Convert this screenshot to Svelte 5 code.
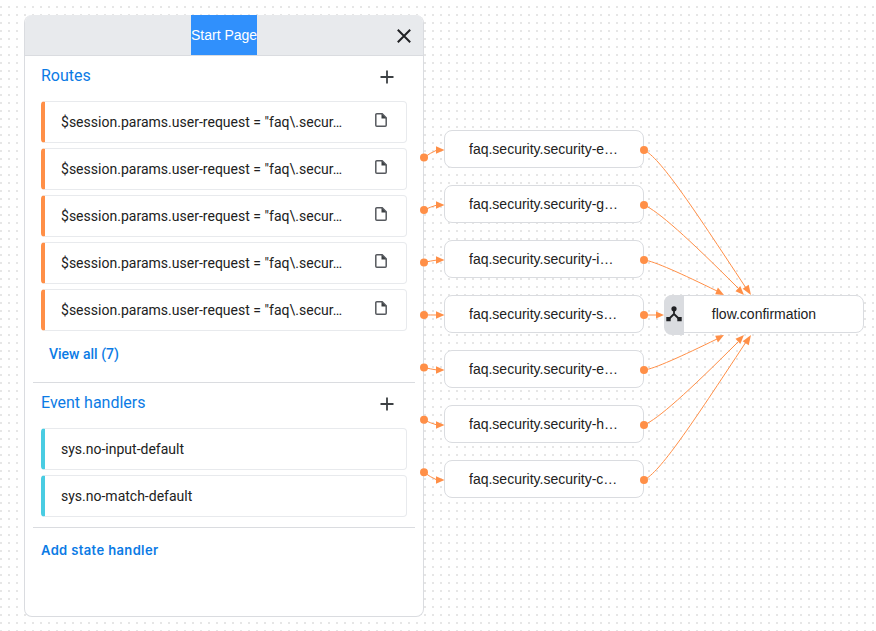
<script>
  const routes = Array.from({ length: 5 }, () => '$session.params.user-request = "faq\\.secur…');
  const handlers = ['sys.no-input-default', 'sys.no-match-default'];
  const nodes = ['e', 'g', 'i', 's', 'e', 'h', 'c'].map((s, i) => ({
    label: `faq.security.security-${s}…`,
    y: 130 + i * 55
  }));
  const inEdges = nodes.map((n, i) => {
    const y = 157.6 + i * 52.45;
    const end = n.y + 20;
    return { y, end, d: `M424 ${y} Q430 ${end + (y - end) * 0.4} 437 ${end}` };
  });
  const outEdges = [
    { d: 'M644 150 C660 158 690 203 746 288', tip: '751,295 748.7,284.8 742.7,288.8' },
    { d: 'M644 205 C658 211 688 238 738 288', tip: '744,295 740.3,286 735.5,291.3' },
    { d: 'M644 260 C654 261 682 274 717 291', tip: '724,295 717.9,287.4 715.2,294.3' },
    { d: 'M644 315 L657 315', tip: '664,315 656,311.5 656,318.5' },
    { d: 'M644 370 C654 369 682 356 717 339', tip: '724,335 717.9,342.6 715.2,335.7' },
    { d: 'M644 425 C658 419 688 392 738 342', tip: '744,335 740.3,344 735.5,338.7' },
    { d: 'M644 480 C660 472 690 427 746 342', tip: '751,335 748.7,345.2 742.7,341.2' }
  ];
</script>

{#snippet plus()}
  <svg class="plus" width="14" height="14" viewBox="0 0 14 14"><path d="M7 .5v13M.5 7h13" /></svg>
{/snippet}

<main class="canvas">
  <section class="panel">
    <header>
      <span class="title">Start Page</span>
      <svg class="close" width="14" height="14" viewBox="0 0 14 14"><path d="M.8.8l12.4 12.4M13.2.8L.8 13.2" /></svg>
    </header>
    <div class="group routes">
      <div class="heading"><h2>Routes</h2>{@render plus()}</div>
      <div class="cards">
        {#each routes as route}
          <div class="card">
            <span>{route}</span>
            <svg width="12" height="14" viewBox="0 0 12 14">
              <path class="file" d="M1.8.8h5.4l4 4v7.4a1 1 0 0 1-1 1H1.8a1 1 0 0 1-1-1V1.8a1 1 0 0 1 1-1z" />
              <path class="fold" d="M6.5.8v4.7h4.8z" />
            </svg>
          </div>
        {/each}
      </div>
      <div class="view">View all (7)</div>
    </div>
    <div class="group events">
      <div class="heading"><h2>Event handlers</h2>{@render plus()}</div>
      <div class="cards">
        {#each handlers as handler}
          <div class="card event"><span>{handler}</span></div>
        {/each}
      </div>
    </div>
    <div class="add">Add state handler</div>
  </section>

  {#each nodes as node}
    <div class="node" style="top: {node.y}px">{node.label}</div>
  {/each}
  <div class="node flow">flow.confirmation</div>
  <div class="badge">
    <svg width="16" height="16" viewBox="0 0 16 16">
      <path class="branch" d="M8 3v5.5M8 8L2.8 13M8 8l5.2 5" />
      <circle cx="8" cy="2.8" r="2.6" /><path d="M.3 10.9h4.4v4.3H.3zM11.3 10.9h4.4v4.3h-4.4z" />
    </svg>
  </div>

  <svg class="edges" width="876" height="631" viewBox="0 0 876 631">
    {#each inEdges as edge}
      <path d={edge.d} />
      <circle cx="424" cy={edge.y} r="4" />
      <polygon points="444.5,{edge.end} 436,{edge.end - 3.7} 436,{edge.end + 3.7}" />
    {/each}
    {#each outEdges as edge, i}
      <path d={edge.d} />
      <circle cx="644" cy={150 + i * 55} r="4" />
      <polygon points={edge.tip} />
    {/each}
  </svg>
</main>

<style>
  :global(body) { margin: 0; }
  .canvas {
    position: relative;
    box-sizing: border-box;
    width: 876px;
    height: 631px;
    padding: 15px 0 0 24px;
    overflow: hidden;
    background: conic-gradient(from 270deg at 2px 2px, #e6e6e6 90deg, #fff 0) 0 6px / 8px 8px;
    font: 14px/20px Roboto, sans-serif;
    color: #212121;
  }
  .panel {
    box-sizing: border-box;
    width: 400px;
    height: 602px;
    border: 1px solid #dadce0;
    border-top: 0;
    border-radius: 8px;
    background: #fff;
    overflow: hidden;
  }
  header {
    display: grid;
    grid-template-columns: 1fr auto 1fr;
    align-items: center;
    height: 40px;
    border-bottom: 1px solid #dadce0;
    background: #e8eaed;
    font-family: "Liberation Sans", Arial, sans-serif;
  }
  .title { grid-column: 2; width: 66px; white-space: nowrap; line-height: 40px; background: #3090fc; color: #fff; }
  .close { justify-self: end; margin: 2px 12px 0 0; fill: none; stroke: #202124; stroke-width: 2; }
  .group { margin: 0 8px; padding: 0 8px; border-bottom: 1px solid #dadce0; }
  .routes { height: 326px; }
  .events { height: 144px; }
  .heading { display: flex; justify-content: space-between; height: 45px; }
  h2 { margin: 0; padding-top: 8px; font-size: 16px; font-weight: 400; line-height: 24px; color: #0b7be5; }
  .plus { margin: 14px 13px 0 0; fill: none; stroke: #3c4043; stroke-width: 1.8; }
  .cards { display: flex; flex-direction: column; gap: 5px; }
  .card {
    display: flex;
    justify-content: space-between;
    box-sizing: border-box;
    height: 42px;
    padding: 10px 19px 0 16px;
    border: 1px solid #e8eaed;
    border-left: 4px solid #ff8f47;
    border-radius: 4px;
    white-space: nowrap;
    letter-spacing: .015px;
  }
  .card.event { border-left-color: #49cce2; letter-spacing: 0; }
  .card svg { margin-top: 1px; }
  .file { fill: none; stroke: #56595e; stroke-width: 1.5; }
  .fold { fill: #3c4043; }
  .view { margin: 13px 8px 0; font-weight: 500; color: #0b7be5; }
  .add { margin: 12px 16px 0; font: 600 13px/20px Inter, sans-serif; letter-spacing: .37px; color: #0b7be5; }
  .node {
    position: absolute;
    left: 444px;
    box-sizing: border-box;
    width: 200px;
    height: 38px;
    padding-left: 24px;
    border: 1px solid #dadce0;
    border-radius: 8px;
    background: #fff;
    font-family: "Liberation Sans", Arial, sans-serif;
    line-height: 37px;
    white-space: nowrap;
  }
  .flow { left: 664px; top: 295px; padding: 0; text-align: center; }
  .badge {
    position: absolute;
    left: 664px;
    top: 295px;
    display: grid;
    place-content: center;
    width: 20px;
    height: 40px;
    border-radius: 8px 0 0 8px;
    background: #dadce0;
  }
  .badge svg { margin-bottom: 3px; fill: #202124; }
  .badge .branch { fill: none; stroke: #202124; stroke-width: 1.8; }
  .edges { position: absolute; inset: 0; fill: #ff8f47; }
  .edges path { fill: none; stroke: #ff8f47; }
</style>
